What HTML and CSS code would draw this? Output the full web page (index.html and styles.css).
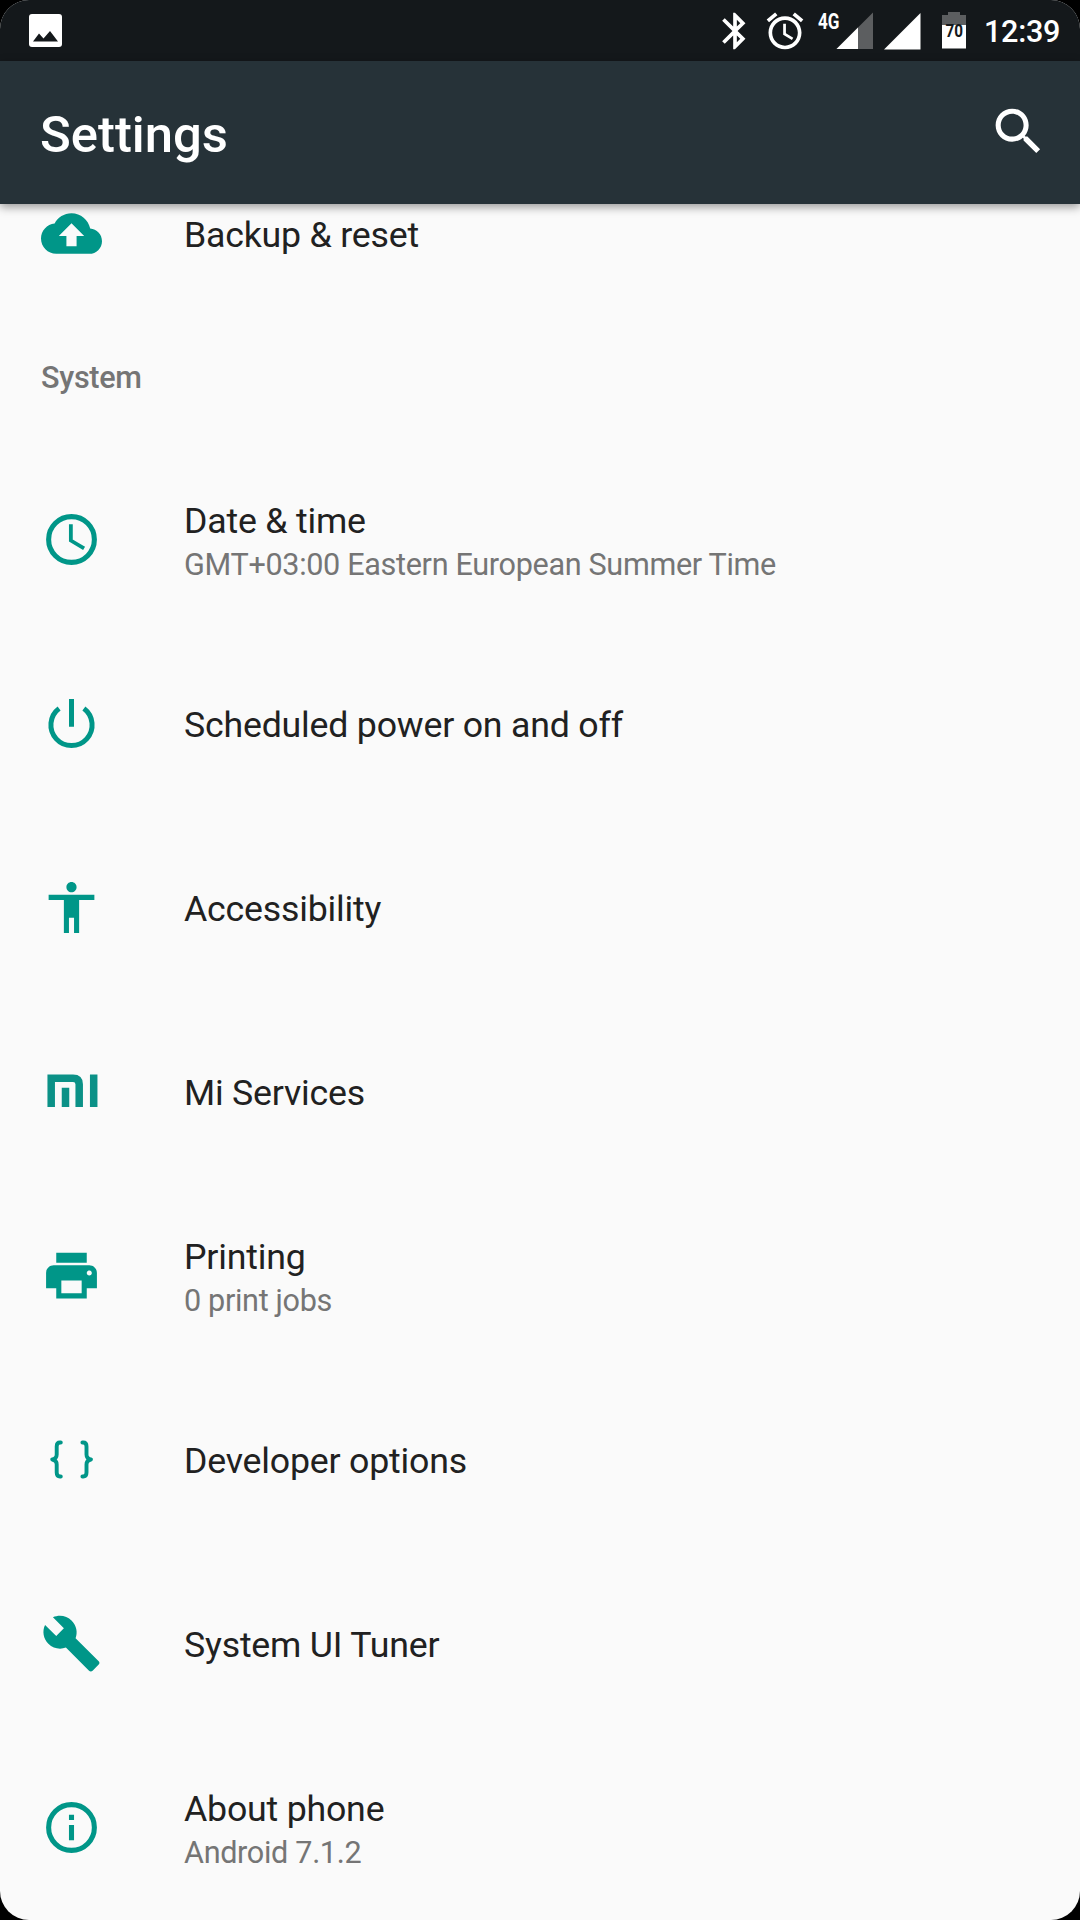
FILE: index.html
```
<!DOCTYPE html>
<html lang="en">
<head>
  <meta charset="UTF-8">
  <title>Settings</title>
  <link rel="stylesheet" href="styles.css">
</head>
<body>
<div class="screen">
  <div class="statusbar">
    <svg class="notif" width="33" height="33" viewBox="0 0 33 33"><rect width="33" height="33" rx="3" fill="#fff"/><path d="M4 27.500L10 19.500l4.500 5L21 17l8 10.500z" fill="#14181b"/></svg>
    <svg class="bluetooth" width="44" height="44" viewBox="0 0 24 24"><path fill="#fff" d="M17.710 7.710L12 2h-1v7.590L6.410 5 5 6.410 10.590 12 5 17.590 6.410 19 11 14.410V22h1l5.710-5.710-4.300-4.290 4.300-4.290zM13 5.830l1.880 1.880L13 9.590V5.830zm1.880 10.460L13 18.170v-3.760l1.880 1.880z"/></svg>
    <svg class="alarm" width="44" height="44" viewBox="0 0 24 24"><path fill="#fff" d="M22 5.720l-4.600-3.860-1.290 1.530 4.600 3.860L22 5.720zM7.880 3.390L6.600 1.860 2 5.710l1.290 1.530 4.590-3.850zM12.500 8H11v6l4.750 2.850.75-1.230-4-2.370V8zM12 4c-4.970 0-9 4.030-9 9s4.020 9 9 9c4.970 0 9-4.030 9-9s-4.030-9-9-9zm0 16c-3.870 0-7-3.130-7-7s3.130-7 7-7 7 3.130 7 7-3.130 7-7 7z"/></svg>
    <svg class="signal" width="60" height="49" viewBox="0 0 60 49">
      <path d="M60 12.500V49H23.500z" fill="#5c5e60"/>
      <path d="M45 27.500V49H23.500z" fill="#fff"/>
      <text x="5" y="29.300" font-size="21.500" font-weight="700" fill="#fff" textLength="21.500" lengthAdjust="spacingAndGlyphs">4G</text>
    </svg>
    <svg class="signal2" width="37" height="37" viewBox="0 0 37 37"><path d="M36.500 0v36.500H0z" fill="#fff"/></svg>
    <svg class="battery" width="24" height="37" viewBox="0 0 24 37">
      <path d="M6 0h12v3h6v10H0V3h6z" fill="#5c5e60"/>
      <path d="M0 13h24v23.500H0z" fill="#fff"/>
      <text x="3.500" y="25.300" font-size="18" font-weight="700" fill="#14181b" textLength="17.500" lengthAdjust="spacingAndGlyphs">70</text>
    </svg>
    <span class="time">12:39</span>
  </div>

  <div class="toolbar">
    <h1 class="title">Settings</h1>
    <svg class="search" width="61" height="61" viewBox="0 0 24 24"><path fill="#fff" d="M15.500 14h-.79l-.28-.27C15.410 12.590 16 11.110 16 9.500 16 5.910 13.090 3 9.500 3S3 5.910 3 9.500 5.910 16 9.500 16c1.610 0 3.090-.59 4.230-1.570l.27.28v.79l5 4.990L20.490 19l-4.990-5zm-6 0C7.010 14 5 11.990 5 9.500S7.010 5 9.500 5 14 7.010 14 9.500 11.990 14 9.500 14z"/></svg>
  </div>

  <div class="list">
    <div class="item first">
      <svg class="icon" viewBox="0 0 24 24"><path d="M19.350 10.040C18.670 6.590 15.640 4 12 4 9.110 4 6.600 5.640 5.350 8.040 2.340 8.360 0 10.910 0 14c0 3.310 2.690 6 6 6h13c2.760 0 5-2.240 5-5 0-2.640-2.050-4.780-4.650-4.960zM14 13v4h-4v-4H7l5-5 5 5h-3z"/></svg>
      <div class="text"><p class="name">Backup &amp; reset</p></div>
    </div>

    <div class="category">System</div>

    <div class="item">
      <svg class="icon line" viewBox="0 0 24 24"><circle cx="12" cy="12" r="9" stroke-width="2"/><path d="M11.750 6v6.400l5.200 3.100" stroke-width="1.500"/></svg>
      <div class="text">
        <p class="name">Date &amp; time</p>
        <p class="summary">GMT+03:00 Eastern European Summer Time</p>
      </div>
    </div>
    <div class="item">
      <svg class="icon line" viewBox="0 0 61 61"><path d="M30.500 6v27.700M18.100 15.500A20.600 20.600 0 1 0 42.900 15.500" stroke-width="5"/></svg>
      <div class="text"><p class="name">Scheduled power on and off</p></div>
    </div>
    <div class="item">
      <svg class="icon" viewBox="0 0 24 24"><path d="M12 2c1.100 0 2 .9 2 2s-.9 2-2 2-2-.9-2-2 .9-2 2-2zm9 7h-6v13h-2v-6h-2v6H9V9H3V7h18v2z"/></svg>
      <div class="text"><p class="name">Accessibility</p></div>
    </div>
    <div class="item">
      <svg class="icon mi" viewBox="0 0 61 61"><path d="M10.200 46V17.300H32Q38.200 17.300 38.200 23.300V46M24.500 26.800V46M52.700 13.500V46"/></svg>
      <div class="text"><p class="name">Mi Services</p></div>
    </div>
    <div class="item">
      <svg class="icon" viewBox="0 0 24 24"><path d="M19 8H5c-1.660 0-3 1.340-3 3v6h4v4h12v-4h4v-6c0-1.660-1.340-3-3-3zm-3 11H8v-5h8v5zm3-7c-.55 0-1-.45-1-1s.45-1 1-1 1 .45 1 1-.45 1-1 1zm-1-9H6v4h12V3z"/></svg>
      <div class="text">
        <p class="name">Printing</p>
        <p class="summary">0 print jobs</p>
      </div>
    </div>
    <div class="item">
      <svg class="icon line round" viewBox="0 0 61 61"><path d="M19.800 13.500h-.8q-3.300 0-3.300 4v8q0 4.200-4.500 5 4.500.8 4.500 5v8q0 4 3.300 4h.8M41.400 13.500h.8q3.300 0 3.300 4v8q0 4.200 4.500 5-4.500.8-4.500 5v8q0 4-3.300 4h-.8" stroke-width="3.900"/></svg>
      <div class="text"><p class="name">Developer options</p></div>
    </div>
    <div class="item">
      <svg class="icon" viewBox="0 0 24 24"><path d="M22.700 19l-9.100-9.100c.9-2.300.4-5-1.500-6.900-2-2-5-2.400-7.400-1.300L9 6 6 9 1.600 4.700C.4 7.100.9 10.100 2.900 12.100c1.900 1.900 4.600 2.400 6.900 1.500l9.100 9.100c.4.4 1 .4 1.400 0l2.300-2.300c.5-.4.5-1.100.1-1.400z"/></svg>
      <div class="text"><p class="name">System UI Tuner</p></div>
    </div>
    <div class="item">
      <svg class="icon line" viewBox="0 0 24 24"><circle cx="12" cy="12" r="9" stroke-width="2"/><path d="M12 7v2M12 11v6" stroke-width="2"/></svg>
      <div class="text">
        <p class="name">About phone</p>
        <p class="summary">Android 7.1.2</p>
      </div>
    </div>
  </div>
</div>
</body>
</html>
```

FILE: styles.css
```
body {margin: 0; background-color: #000; font-family: Roboto, "Liberation Sans", sans-serif;}
p, h1 {margin: 0;}
svg {display: block; flex: none;}

.screen {display: flex; flex-direction: column; width: 1080px; height: 1920px; overflow: hidden; border-radius: 29px; background-color: #fafafa;}

/* status bar */
.statusbar {display: flex; align-items: flex-start; flex: none; height: 61px; box-sizing: border-box; padding: 0 0 0 29px; background-color: #14181b;}
.notif {margin-top: 14px;}
.bluetooth {margin: 9px 0 0 651px;}
.alarm {margin: 9px 0 0 5.5px;}
.signal {margin: 0 0 0 6px;}
.signal2 {margin: 12.5px 0 0 11.5px;}
.battery {margin: 12px 0 0 21px;}
.time {margin: 14px 0 0 18px; font-size: 30.6px; line-height: 36px; letter-spacing: -0.3px; font-weight: 500; color: #fff;}

/* toolbar */
.toolbar {display: flex; align-items: center; justify-content: space-between; flex: none; height: 143px; box-sizing: border-box; padding: 0 31px 0 40px; background-color: #263238; position: relative; box-shadow: 0 3px 9px rgba(0,0,0,0.4);}
.title {padding-top: 4px; font-size: 50.8px; line-height: 60px; font-weight: 500; color: #fff;}
.search {margin-bottom: 3px;}

/* settings list, scrolled part of the way down */
.list {flex: 1; min-height: 0;}
.item {display: flex; align-items: center; height: 184px; padding-left: 41px;}
.first {margin-top: -63px;}
.icon {width: 61px; height: 61px; fill: #009688;}
.line {fill: none; stroke: #009688;}
.round {stroke-linecap: round; stroke-linejoin: round;}
.mi {fill: none; stroke: #0b9187; stroke-width: 7.5;}
.text {margin-left: 82px; padding-top: 3px;}
.name {font-size: 35.7px; line-height: 42px; letter-spacing: -0.2px; color: #212121;}
.summary {padding-top: 5px; margin-bottom: -1px; font-size: 30.6px; line-height: 36px; letter-spacing: -0.33px; color: #757575;}
.category {height: 122px; box-sizing: border-box; padding: 35px 0 0 41px; font-size: 30.6px; line-height: 36px; letter-spacing: -0.3px; font-weight: 500; color: #757575;}
```
